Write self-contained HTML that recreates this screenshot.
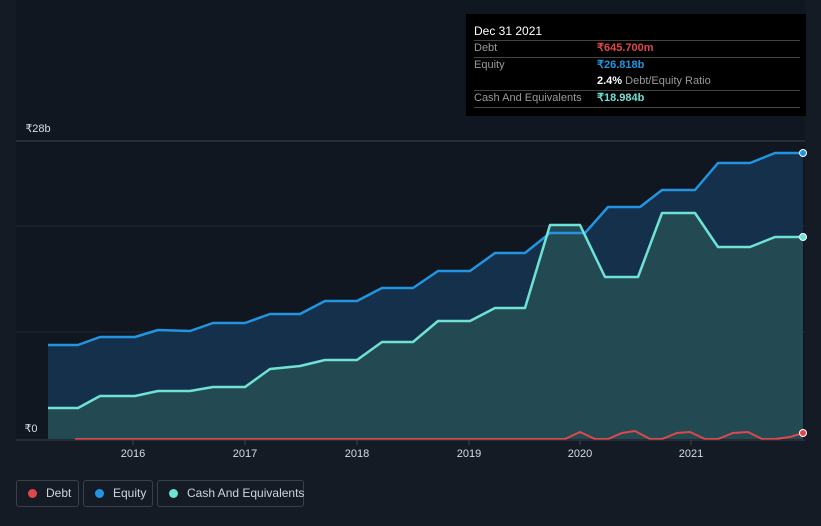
<!DOCTYPE html>
<html style="height:526px;overflow:hidden"><head><style>
body{margin:0;width:821px;height:526px;background:#151b25;font-family:"Liberation Sans",sans-serif;overflow:hidden;position:relative}
.tt{position:absolute;left:466px;top:14px;width:340px;height:102px;background:#000;color:#fff;font-size:11px}
.tt div{position:absolute;line-height:16px;white-space:nowrap}
.tt .l{height:0;border-top:1px solid #444;left:8px;width:326px}
.lg{position:absolute;top:480px;height:27px;border:1px solid #3a404a;border-radius:3px;color:#d0d4da;font-size:12px;line-height:25px;box-sizing:border-box;white-space:nowrap}
.lg span{display:inline-block;width:9px;height:9px;border-radius:50%;margin:0 9px 0 11px;vertical-align:-1px}
</style></head><body>
<svg width="821" height="526" style="position:absolute;left:0;top:0">
<rect x="16" y="0" width="789" height="440" fill="#111720"/>
<line x1="16" y1="141" x2="805" y2="141" stroke="#3a404a"/>
<line x1="16" y1="226" x2="805" y2="226" stroke="#232a34"/>
<line x1="16" y1="332" x2="805" y2="332" stroke="#232a34"/>
<polygon fill="#15304a" points="48,345 78,345 100,337 135,337 158,330 190,331 213,323 245,323 270,314 300,314 325,301 357,301 382,288 413,288 438,271 470,271 495,253 525,253 550,233 585,233 608,207 640,207 662,190 695,190 718,163 750,163 775,153 803,153 803,439 48,439"/>
<polygon fill="#234a52" points="48,408 78,408 100,396 135,396 158,391 190,391 213,387 245,387 270,369 300,366 325,360 357,360 382,342 413,342 438,321 470,321 495,308 525,308 550,225 580,225 605,277 638,277 662,213 695,213 718,247 750,247 775,237 803,237 803,439 48,439"/>
<polyline fill="none" stroke="#2394df" stroke-width="2.5" stroke-linejoin="round" points="48,345 78,345 100,337 135,337 158,330 190,331 213,323 245,323 270,314 300,314 325,301 357,301 382,288 413,288 438,271 470,271 495,253 525,253 550,233 585,233 608,207 640,207 662,190 695,190 718,163 750,163 775,153 803,153"/>
<polyline fill="none" stroke="#6ee2d4" stroke-width="2.5" stroke-linejoin="round" points="48,408 78,408 100,396 135,396 158,391 190,391 213,387 245,387 270,369 300,366 325,360 357,360 382,342 413,342 438,321 470,321 495,308 525,308 550,225 580,225 605,277 638,277 662,213 695,213 718,247 750,247 775,237 803,237"/>
<polyline fill="none" stroke="#e0474c" stroke-width="2" points="75,439 565,439 580,432 595,439 608,439 622,433 635,431 650,439 662,439 677,433 690,432 705,439 718,439 733,433 748,432 762,439 775,439 790,437 803,433"/>
<line x1="16" y1="440" x2="805" y2="440" stroke="#3a404a"/>
<g stroke="#3a404a"><line x1="133" y1="440" x2="133" y2="445"/><line x1="245" y1="440" x2="245" y2="445"/><line x1="357" y1="440" x2="357" y2="445"/><line x1="469" y1="440" x2="469" y2="445"/><line x1="580" y1="440" x2="580" y2="445"/><line x1="691" y1="440" x2="691" y2="445"/></g>
<circle cx="803" cy="153" r="3.5" fill="#2394df" stroke="#fff" stroke-width="1"/>
<circle cx="803" cy="237" r="3.5" fill="#6ee2d4" stroke="#fff" stroke-width="1"/>
<circle cx="803" cy="433" r="3.5" fill="#e0474c" stroke="#fff" stroke-width="1"/>
<g fill="#d8dce2" font-size="11" font-family="Liberation Sans,sans-serif" text-anchor="middle">
<text x="133" y="457">2016</text><text x="245" y="457">2017</text><text x="357" y="457">2018</text><text x="469" y="457">2019</text><text x="580" y="457">2020</text><text x="691" y="457">2021</text>
<text x="38" y="132">₹28b</text><text x="31" y="432">₹0</text></g>
</svg>
<div class="tt">
<div style="left:8px;top:9px;font-size:12px">Dec 31 2021</div>
<div class="l" style="top:26px"></div>
<div style="left:8px;top:26px;color:#999">Debt</div><div style="left:131px;top:26px;color:#e0474c;font-weight:bold">₹645.700m</div>
<div class="l" style="top:43px"></div>
<div style="left:8px;top:43px;color:#999">Equity</div><div style="left:131px;top:43px;color:#2394df;font-weight:bold">₹26.818b</div>
<div style="left:131px;top:59px"><b>2.4%</b> <span style="color:#999">Debt/Equity Ratio</span></div>
<div class="l" style="top:76px"></div>
<div style="left:8px;top:76px;color:#999">Cash And Equivalents</div><div style="left:131px;top:76px;color:#6ee2d4;font-weight:bold">₹18.984b</div>
<div class="l" style="top:93px"></div>
</div>
<div class="lg" style="left:16px;width:63px"><span style="background:#e0474c"></span>Debt</div>
<div class="lg" style="left:83px;width:70px"><span style="background:#2394df"></span>Equity</div>
<div class="lg" style="left:157px;width:147px"><span style="background:#6ee2d4"></span>Cash And Equivalents</div>
</body></html>
